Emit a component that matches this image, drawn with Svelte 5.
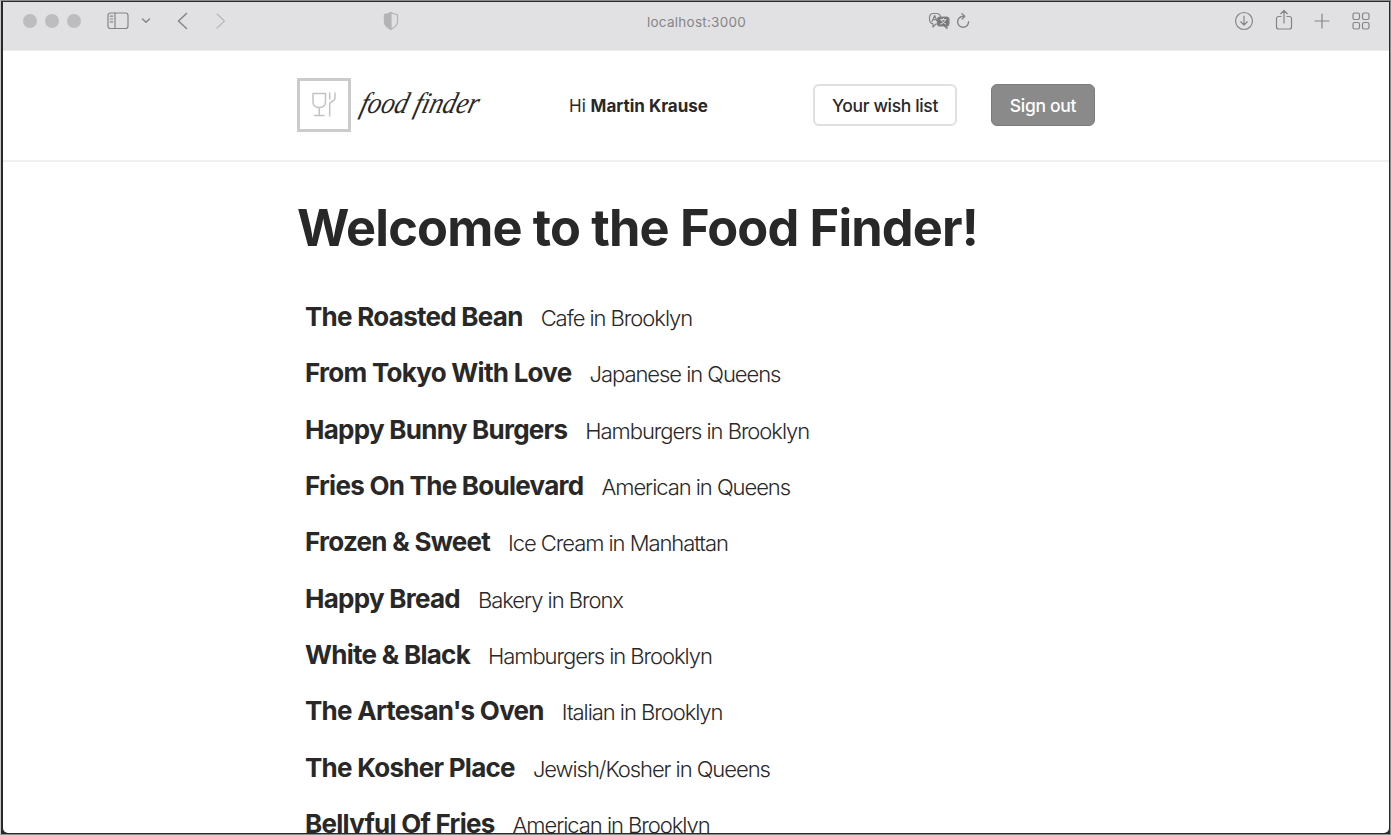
<script>
  const places = [
    ['The Roasted Bean', 'Cafe in Brooklyn'],
    ['From Tokyo With Love', 'Japanese in Queens'],
    ['Happy Bunny Burgers', 'Hamburgers in Brooklyn'],
    ['Fries On The Boulevard', 'American in Queens'],
    ['Frozen & Sweet', 'Ice Cream in Manhattan'],
    ['Happy Bread', 'Bakery in Bronx'],
    ['White & Black', 'Hamburgers in Brooklyn'],
    ["The Artesan's Oven", 'Italian in Brooklyn'],
    ['The Kosher Place', 'Jewish/Kosher in Queens'],
    ['Bellyful Of Fries', 'American in Brooklyn']
  ];
</script>

<div class="frame">
<div class="window">
  <div class="toolbar">
    <div class="lights"><i></i><i></i><i></i></div>
    <svg class="sidebar" width="22" height="18" viewBox="0 0 22 18">
      <rect x="1" y="1" width="20" height="15.5" rx="2.5" />
      <path d="M8 1v15.5M3.300 4.200h2.400M3.300 7h2.400M3.300 9.800h2.400" />
    </svg>
    <svg class="chev" width="10" height="8" viewBox="0 0 10 8"><path d="M1.500 2 5 5.300 8.500 2" /></svg>
    <svg class="back" width="11" height="18" viewBox="0 0 11 18"><path d="M9.500 1.500 1.500 9l8 7.500" /></svg>
    <svg class="forward" width="11" height="18" viewBox="0 0 11 18"><path d="m2 2 7.500 7L2 16" /></svg>
    <svg class="shield" width="16" height="20" viewBox="0 0 16 20">
      <path d="M8 1.500C6 3 3.600 3.300 1.500 3.600V11c0 3.500 3 5.500 6.500 7.400 3.500-1.900 6.500-3.900 6.500-7.400V3.600C12.400 3.300 10 3 8 1.500Z" />
      <path class="solid" d="M8 1.500C6 3 3.600 3.300 1.500 3.600V11c0 3.500 3 5.500 6.500 7.400Z" />
    </svg>
    <span class="address">localhost:3000</span>
    <svg class="translate" width="22" height="18" viewBox="0 0 22 18">
      <path d="M9 12H8l-3 3v-3.200C2.500 11.500 1.500 10 1.500 7V5.500c0-2.500 1.500-4 4-4h3c2.500 0 3.700 1.200 4 3" />
      <path d="M4 9.500 6.700 3.500 9.200 9.500M5 7.600h3.600" />
      <path class="solid" d="M12 5h6.500c1.500 0 2.500 1 2.500 2.500v4c0 1.500-1 2.300-2 2.500v2.600L16.300 14H12c-1.500 0-2.500-1-2.500-2.500v-4C9.500 6 10.500 5 12 5Z" />
      <path class="light" d="M12.500 7.700h5.500M15.200 6.500v1.200M13.500 8.200c1 2 2.200 3 4.200 3.800M17.200 8.200c-1 2-2.200 3-4.500 3.800" />
    </svg>
    <svg class="reload" width="14" height="16" viewBox="0 0 14 16">
      <path d="M12.600 8.800A5.500 5.500 0 1 1 7 3.300h1.500M6 .8l2.800 2.500L6.200 6" />
    </svg>
    <svg class="download" width="20" height="20" viewBox="0 0 20 20">
      <circle cx="10" cy="10" r="8.500" /><path d="M10 5v9M6.700 10.800 10 14l3.300-3.200" />
    </svg>
    <svg class="share" width="18" height="22" viewBox="0 0 18 22">
      <path d="M6 7.500H3.500a2 2 0 0 0-2 2V18a2 2 0 0 0 2 2h11a2 2 0 0 0 2-2V9.500a2 2 0 0 0-2-2H12M9 14V1.500M5.700 4.700 9 1.500l3.300 3.200" />
    </svg>
    <svg class="plus" width="16" height="16" viewBox="0 0 16 16"><path d="M8 1v14M1 8h14" /></svg>
    <svg class="tabs" width="18" height="18" viewBox="0 0 18 18">
      <rect x="1" y="1" width="6.500" height="6.500" rx="1.700" /><rect x="10.500" y="1" width="6.500" height="6.500" rx="1.700" />
      <rect x="1" y="10.500" width="6.500" height="6.500" rx="1.700" /><rect x="10.500" y="10.500" width="6.500" height="6.500" rx="1.700" />
    </svg>
  </div>

  <header>
    <div class="logo">
      <svg width="30" height="30" viewBox="0 0 30 30">
        <path d="M4 3.500h12.500v8.800c0 3.300-2.800 5.200-6.200 5.200S4 15.600 4 12.300ZM10.200 17.500V25.500M5.500 25.500h9.500M20.700 3v6M20.700 14v12M26 3v5.500c0 3-5.300 2.500-5.300 5.500" />
      </svg>
    </div>
    <svg class="brand" width="130" height="46" viewBox="0 0 130 46">
      <text x="12" y="31" textLength="118" lengthAdjust="spacingAndGlyphs" transform="skewX(-15)">food finder</text>
    </svg>
    <p class="hello">Hi <b>Martin Krause</b></p>
    <button class="wish">Your wish list</button>
    <button class="out">Sign out</button>
  </header>

  <main>
    <h1>Welcome to the Food Finder!</h1>
    <ul>
      {#each places as [name, detail]}
        <li><b>{name}</b><span>{detail}</span></li>
      {/each}
    </ul>
  </main>
</div>
</div>

<style>
  :global(body) { background: #fff; }
  .frame {
    box-sizing: border-box;
    width: 1391px;
    height: 835px;
    padding: 1px 1px 1px 2px;
    background: #292929;
    border: 1px solid #8c8c8c;
    border-left-color: #c8c8c8;
  }
  .window {
    height: 100%;
    overflow: hidden;
    border-radius: 0 0 5px 5px;
    background: #fff;
    font-family: Inter, "Liberation Sans", sans-serif;
    color: #292829;
  }
  svg { fill: none; stroke: #858587; stroke-width: 1.2; stroke-linecap: round; stroke-linejoin: round; display: block; flex: none; }
  .toolbar {
    box-sizing: border-box;
    height: 49px;
    padding: 0 19px 11px 20px;
    display: flex;
    align-items: center;
    background: #e1e1e3;
    border-bottom: 1px solid #ececee;
  }
  .lights { display: flex; gap: 8px; }
  .lights i { width: 14px; height: 14px; border-radius: 50%; background: #bdbdbf; }
  .sidebar { margin-left: 26px; }
  .chev { margin-left: 12px; stroke-width: 1.5; }
  .back { margin-left: 26px; stroke-width: 1.5; }
  .forward { margin-left: 27px; stroke: #b8b8ba; }
  .shield { margin-left: 157px; stroke: #b4b4b6; }
  .shield .solid { fill: #b4b4b6; }
  .address { width: 100px; margin: 3px 0 0 248px; font-size: 13.5px; letter-spacing: 0.25px; color: #858587; white-space: nowrap; }
  .translate { margin-left: 181px; }
  .solid { fill: #77777a; }
  .light { stroke: #e1e1e3; stroke-width: 1; }
  .reload { margin-left: 6px; stroke-width: 1.4; }
  .download { margin-left: auto; }
  .share { margin: -2px 0 0 21px; }
  .plus { margin-left: 21px; }
  .tabs { margin-left: 22px; }

  header {
    box-sizing: border-box;
    height: 111px;
    padding: 0 0 1px 294px;
    display: flex;
    align-items: center;
    border-bottom: 2px solid #f0f0f0;
  }
  .logo { box-sizing: border-box; width: 54px; height: 54px; border: 3px solid #cbcbcc; display: grid; place-items: center; }
  .logo svg { stroke: #c2c2c4; stroke-width: 1.5; }
  .brand { margin-left: 4px; stroke: none; overflow: visible; }
  .brand text { font: italic 30px "Liberation Serif", serif; fill: #292829; }
  .hello { width: 140px; margin: 1px 0 0 84px; font-size: 17px; white-space: nowrap; }
  .hello b { font-weight: 700; }
  button { box-sizing: border-box; height: 42px; padding: 1px 0 0; font: 500 17.5px Inter, sans-serif; color: inherit; border-radius: 6px; white-space: nowrap; }
  .wish { width: 144px; margin-left: 104px; background: #fff; border: 2px solid #e0e0e0; letter-spacing: -0.35px; }
  .out { width: 104px; margin-left: 34px; background: #8a8a8b; border: 1px solid #7b7b7c; color: #fff; letter-spacing: -0.3px; }

  main { padding-left: 294px; }
  h1 { margin: 34px 0 0; font-size: 50.5px; line-height: 64px; font-weight: 700; letter-spacing: -0.84px; white-space: nowrap; }
  ul { margin: 29px 0 0; padding: 0 0 0 8px; list-style: none; }
  li { height: 56.35px; line-height: 56px; display: flex; align-items: baseline; white-space: nowrap; }
  li b { font-size: 26px; font-weight: 700; letter-spacing: -0.73px; }
  li span { margin-left: 18px; font-size: 22px; font-weight: 330; letter-spacing: -1.05px; }
</style>
